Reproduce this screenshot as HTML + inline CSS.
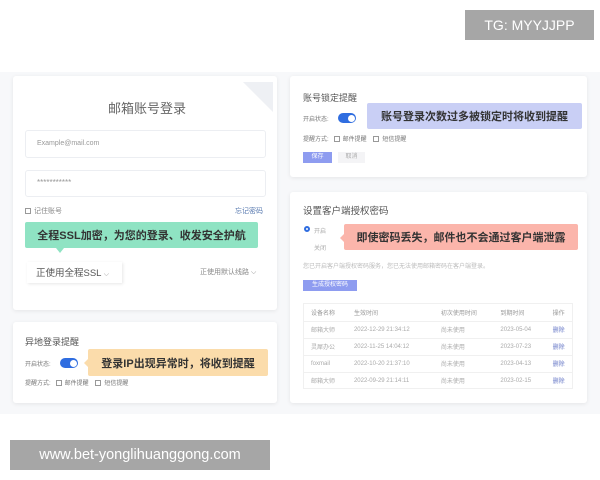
<!DOCTYPE html>
<html><head><meta charset="utf-8"><style>
*{margin:0;padding:0;box-sizing:border-box}
body{width:600px;height:480px;background:#fff;position:relative;overflow:hidden;font-family:"Liberation Sans","Noto Sans CJK SC",sans-serif;color:#333}
.a{position:absolute}
.bg{left:0;top:72px;width:600px;height:342px;background:#f7f8fa}
.card{position:absolute;background:#fff;border-radius:3px;box-shadow:0 1px 4px rgba(0,0,0,.08)}
.t{font-size:10px;color:#555;white-space:nowrap}
.s{font-size:7px;color:#888;white-space:nowrap}
.xs{font-size:6px;color:#aaa;white-space:nowrap}
.inp{border:1px solid #eceef2;border-radius:3px;background:#fff}
.tog{width:18px;height:10px;border-radius:5px;background:#2f6de0}
.tog:after{content:"";position:absolute;right:1.5px;top:1.5px;width:7px;height:7px;border-radius:50%;background:#fff}
.cb{display:inline-block;width:6px;height:6px;border:1px solid #999;vertical-align:middle;margin-right:3px}
.ban{font-size:11px;color:#333;display:flex;align-items:center;justify-content:center;border-radius:2px;white-space:nowrap}
table{border-collapse:collapse;font-size:6px;color:#aaa}
td{height:17px;padding-left:7px;border-bottom:1px solid #f0f0f0;white-space:nowrap}
.lab{background:#a6a6a6;color:#fff;font-size:14px;display:flex;align-items:center;justify-content:center}
</style></head><body>
<div class="a bg"></div>
<div class="a lab" style="left:465px;top:10px;width:129px;height:30px">TG: MYYJJPP</div>

<div class="card" style="left:13px;top:76px;width:264px;height:234px"></div>
<div class="a" style="left:243px;top:82px;width:0;height:0;border-left:30px solid transparent;border-top:30px solid #eef0f4"></div>
<div class="a t" style="left:108px;top:98px;font-size:13px;color:#666">邮箱账号登录</div>
<div class="a inp" style="left:25px;top:130px;width:241px;height:28px"></div>
<div class="a xs" style="left:37px;top:140px;font-size:7px;color:#999">Example@mail.com</div>
<div class="a inp" style="left:25px;top:170px;width:241px;height:27px"></div>
<div class="a xs" style="left:37px;top:178px;font-size:8px;color:#999">***********</div>
<div class="a s" style="left:25px;top:206px"><span class="cb"></span>记住账号</div>
<div class="a s" style="left:235px;top:206px;color:#5a7bb0">忘记密码</div>
<div class="a ban" style="left:25px;top:222px;width:233px;height:26px;background:#8fe3c3;font-weight:bold">全程SSL加密，为您的登录、收发安全护航</div>
<div class="a" style="left:56px;top:248px;border-left:4px solid transparent;border-right:4px solid transparent;border-top:5px solid #8fe3c3"></div>
<div class="a" style="left:27px;top:262px;width:95px;height:21px;background:#fff;box-shadow:1px 1px 3px rgba(0,0,0,.1)"></div>
<div class="a t" style="left:36px;top:265px;font-size:9.5px">正使用全程SSL <span style="font-size:7px;color:#999">⌵</span></div>
<div class="a s" style="left:200px;top:267px">正使用默认线路 ⌵</div>

<div class="card" style="left:13px;top:322px;width:264px;height:81px"></div>
<div class="a t" style="left:25px;top:335px;font-size:9px">异地登录提醒</div>
<div class="a xs" style="left:25px;top:359px;color:#777">开启状态:</div>
<div class="a tog" style="left:60px;top:358px"></div>
<div class="a ban" style="left:88px;top:349px;width:180px;height:27px;background:#fbdcab;font-weight:bold">登录IP出现异常时，将收到提醒</div>
<div class="a" style="left:84px;top:359px;border-top:4px solid transparent;border-bottom:4px solid transparent;border-right:4px solid #fbdcab"></div>
<div class="a xs" style="left:25px;top:378px;color:#777">提醒方式: &nbsp;&nbsp;<span class="cb"></span>邮件提醒 &nbsp;&nbsp;&nbsp;<span class="cb"></span>短信提醒</div>

<div class="card" style="left:290px;top:76px;width:297px;height:101px"></div>
<div class="a t" style="left:303px;top:91px;font-size:9px">账号锁定提醒</div>
<div class="a xs" style="left:303px;top:114px;color:#777">开启状态:</div>
<div class="a tog" style="left:338px;top:113px"></div>
<div class="a ban" style="left:367px;top:103px;width:215px;height:26px;background:#c9cff5;font-weight:bold">账号登录次数过多被锁定时将收到提醒</div>
<div class="a xs" style="left:303px;top:134px;color:#777">提醒方式: &nbsp;&nbsp;<span class="cb"></span>邮件提醒 &nbsp;&nbsp;&nbsp;<span class="cb"></span>短信提醒</div>
<div class="a xs" style="left:303px;top:152px;width:29px;height:11px;background:#8e9cf0;color:#fff;text-align:center;line-height:11px">保存</div>
<div class="a xs" style="left:338px;top:152px;width:27px;height:11px;background:#f4f4f6;text-align:center;line-height:11px">取消</div>

<div class="card" style="left:290px;top:192px;width:297px;height:211px"></div>
<div class="a t" style="left:303px;top:203px;font-size:9.5px">设置客户端授权密码</div>
<div class="a" style="left:304px;top:226px;width:6px;height:6px;border:2px solid #2f6de0;border-radius:50%"></div>
<div class="a xs" style="left:314px;top:226px">开启</div>
<div class="a xs" style="left:314px;top:243px">关闭</div>
<div class="a ban" style="left:344px;top:224px;width:234px;height:26px;background:#fbb5ab;font-weight:bold">即使密码丢失，邮件也不会通过客户端泄露</div>
<div class="a" style="left:340px;top:234px;border-top:4px solid transparent;border-bottom:4px solid transparent;border-right:4px solid #fbb5ab"></div>
<div class="a xs" style="left:303px;top:261px;color:#bbb">您已开启客户端授权密码服务，您已无法使用邮箱密码在客户端登录。</div>
<div class="a xs" style="left:303px;top:280px;width:54px;height:11px;background:#8e9cf0;color:#fff;text-align:center;line-height:11px">生成授权密码</div>
<div class="a" style="left:303px;top:303px;width:270px;height:86px;border:1px solid #f0f0f0">
<table style="width:100%">
<tr><td style="color:#999">设备名称</td><td style="color:#999">生效时间</td><td style="color:#999">初次使用时间</td><td style="color:#999">到期时间</td><td style="color:#999">操作</td></tr>
<tr><td>邮箱大师</td><td>2022-12-29 21:34:12</td><td>尚未使用</td><td>2023-05-04</td><td style="color:#6a7bc8">删除</td></tr>
<tr><td>灵犀办公</td><td>2022-11-25 14:04:12</td><td>尚未使用</td><td>2023-07-23</td><td style="color:#6a7bc8">删除</td></tr>
<tr><td>foxmail</td><td>2022-10-20 21:37:10</td><td>尚未使用</td><td>2023-04-13</td><td style="color:#6a7bc8">删除</td></tr>
<tr><td style="border:0">邮箱大师</td><td style="border:0">2022-09-29 21:14:11</td><td style="border:0">尚未使用</td><td style="border:0">2023-02-15</td><td style="border:0;color:#6a7bc8">删除</td></tr>
</table></div>

<div class="a lab" style="left:10px;top:440px;width:260px;height:30px;font-size:14.5px">www.bet-yonglihuanggong.com</div>
</body></html>
